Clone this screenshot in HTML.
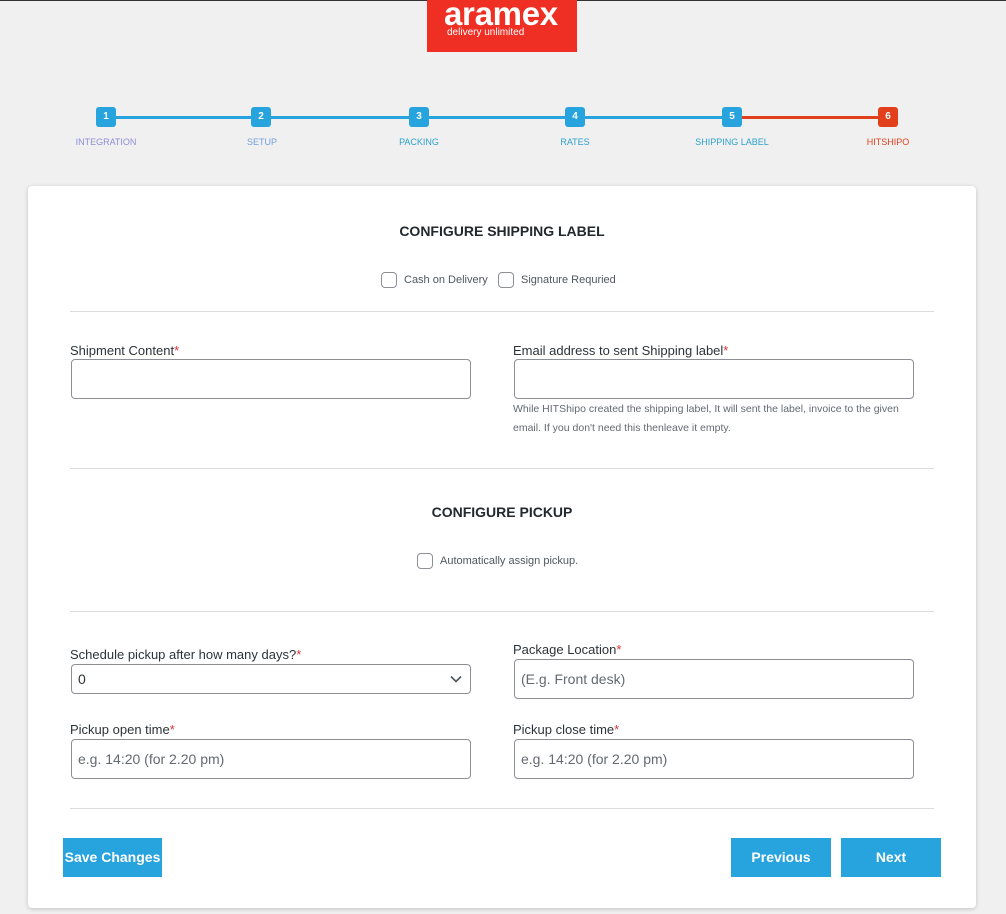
<!DOCTYPE html>
<html><head><meta charset="utf-8"><style>
*{box-sizing:border-box;margin:0;padding:0}
body{width:1006px;height:914px;background:#f0f0f1;font-family:"Liberation Sans",sans-serif;position:relative;overflow:hidden;color:#2c3338}
.topline{position:absolute;left:0;top:0;width:1006px;height:1px;background:#333}
.logo{position:absolute;left:427px;top:0;width:150px;height:52px;background:#ef2e24;color:#fff;overflow:hidden}
.logo .a{position:absolute;left:17px;top:-5px;font-size:33px;font-weight:bold;letter-spacing:-0.3px;line-height:38px}
.logo .d{position:absolute;left:20px;top:27px;font-size:10px}
.line{position:absolute;top:116px;height:3px}
.step{position:absolute;top:107px;width:20px;height:20px;border-radius:3px;background:#27a3dd;color:#fff;font-size:10px;font-weight:bold;text-align:center;line-height:20px}
.lbl{position:absolute;top:137px;font-size:9px;color:#2ea2cc;width:120px;text-align:center}
.card{position:absolute;left:28px;top:186px;width:948px;height:722px;background:#fff;border-radius:4px;box-shadow:0 1px 4px rgba(0,0,0,.2)}
.h{position:absolute;left:0;width:948px;text-align:center;font-size:14px;font-weight:bold;color:#23282d}
.hr{position:absolute;left:42px;width:864px;height:1px;background:#dcdcde}
.cb{position:absolute;width:16px;height:16px;border:1px solid #8c8f94;border-radius:4px;background:#fff}
.cbl{position:absolute;font-size:11px;color:#50575e}
.fl{position:absolute;font-size:13px;color:#2c3338}
.fl span{color:#d63638}
.in{position:absolute;width:400px;height:40px;border:1px solid #8c8f94;border-radius:4px;background:#fff;font-size:14px;color:#646970;padding:0 6px;line-height:38px}
.help{position:absolute;left:485px;top:214px;width:410px;font-size:10.5px;color:#646970;line-height:19px}
.btn{position:absolute;top:652px;height:39px;background:#27a3dd;color:#fff;font-size:14px;font-weight:bold;text-align:center;line-height:39px}
</style></head><body>
<div class="topline"></div>
<div class="logo"><div class="a">aramex</div><div class="d">delivery unlimited</div></div>
<div class="line" style="left:106px;width:627px;background:#27a3dd"></div>
<div class="line" style="left:733px;width:155px;background:#e2401c"></div>
<div class="step" style="left:96px">1</div>
<div class="step" style="left:251px">2</div>
<div class="step" style="left:409px">3</div>
<div class="step" style="left:565px">4</div>
<div class="step" style="left:722px">5</div>
<div class="step" style="left:878px;background:#e2401c">6</div>
<div class="lbl" style="left:46px;color:#8e8ed8">INTEGRATION</div>
<div class="lbl" style="left:202px;color:#6f9fde">SETUP</div>
<div class="lbl" style="left:359px">PACKING</div>
<div class="lbl" style="left:515px">RATES</div>
<div class="lbl" style="left:672px">SHIPPING LABEL</div>
<div class="lbl" style="left:828px;color:#e2401c">HITSHIPO</div>

<div class="card">
<div class="h" style="top:37px">CONFIGURE SHIPPING LABEL</div>
<div class="cb" style="left:353px;top:86px"></div><div class="cbl" style="left:376px;top:88px">Cash on Delivery</div>
<div class="cb" style="left:470px;top:86px"></div><div class="cbl" style="left:493px;top:88px">Signature Requried</div>
<div class="hr" style="top:125px"></div>
<div class="fl" style="left:42px;top:157px">Shipment Content<span>*</span></div>
<div class="in" style="left:43px;top:173px"></div>
<div class="fl" style="left:485px;top:157px">Email address to sent Shipping label<span>*</span></div>
<div class="in" style="left:486px;top:173px"></div>
<div class="help">While HITShipo created the shipping label, It will sent the label, invoice to the given email. If you don't need this thenleave it empty.</div>
<div class="hr" style="top:282px"></div>
<div class="h" style="top:318px">CONFIGURE PICKUP</div>
<div class="cb" style="left:389px;top:367px"></div><div class="cbl" style="left:412px;top:369px">Automatically assign pickup.</div>
<div class="hr" style="top:425px"></div>
<div class="fl" style="left:42px;top:461px">Schedule pickup after how many days?<span>*</span></div>
<div class="in" style="left:43px;top:478px;height:30px;line-height:28px;color:#2c3338">0
<svg style="position:absolute;right:8px;top:10px" width="12" height="8" viewBox="0 0 12 8"><path d="M1 1.5 6 6.5 11 1.5" fill="none" stroke="#50575e" stroke-width="1.6"/></svg></div>
<div class="fl" style="left:485px;top:456px">Package Location<span>*</span></div>
<div class="in" style="left:486px;top:473px">(E.g. Front desk)</div>
<div class="fl" style="left:42px;top:536px">Pickup open time<span>*</span></div>
<div class="in" style="left:43px;top:553px">e.g. 14:20 (for 2.20 pm)</div>
<div class="fl" style="left:485px;top:536px">Pickup close time<span>*</span></div>
<div class="in" style="left:486px;top:553px">e.g. 14:20 (for 2.20 pm)</div>
<div class="hr" style="top:622px"></div>
<div class="btn" style="left:35px;width:99px">Save Changes</div>
<div class="btn" style="left:703px;width:100px">Previous</div>
<div class="btn" style="left:813px;width:100px">Next</div>
</div>
</body></html>
